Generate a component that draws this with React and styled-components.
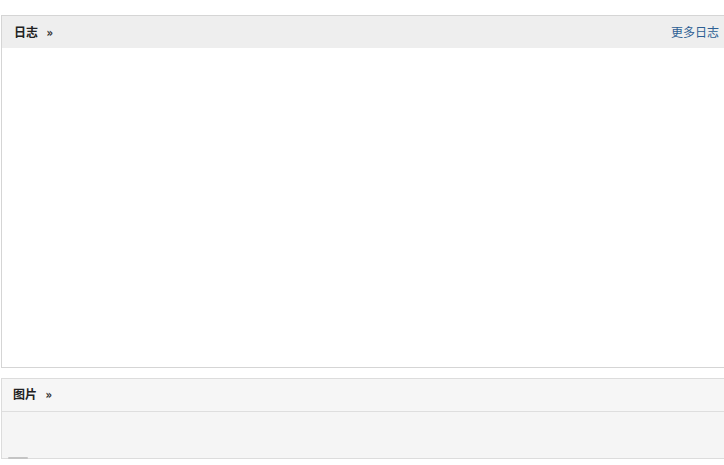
import {createGlobalStyle, styled} from "styled-components";

const GlobalStyle = createGlobalStyle`
  html, body {
    margin: 0;
    padding: 0;
    background: #fff;
    overflow: hidden;
    font-family: "Liberation Sans", "Noto Sans CJK SC", sans-serif;
    font-size: 12px;
  }
`

const Page = styled.div`
  padding: 15px 0 0 1px;
  width: 724px;
`

const Panel = styled.section`
  border: 1px solid ${props => props.$border || "#d8d8d8"};
  background: ${props => props.$bg || "#fff"};
  height: ${props => props.$height}px;
  margin-bottom: ${props => props.$gap || 0}px;
  box-sizing: border-box;
  position: relative;
`

const Header = styled.div`
  display: flex;
  align-items: center;
  justify-content: space-between;
  height: 32px;
  padding-left: ${props => props.$padLeft || 12}px;
  background: ${props => props.$bg || "#eeeeee"};
  border-bottom: ${props => props.$line ? "1px solid #dedede" : "none"};
`

const Title = styled.h3`
  margin: ${props => props.$lift || 0}px 0 0 0;
  font-size: 12px;
  font-weight: bold;
  color: #222;
  display: flex;
  align-items: center;
  gap: 8px;
  font-family: "Noto Sans CJK SC", sans-serif;

  > span {
    font-family: "DejaVu Sans", sans-serif;
    font-size: 12px;
    font-weight: bold;
    color: #333;
    transform: scaleX(0.85);
    margin-top: 2px;
  }
`

const More = styled.a`
  color: #2d5f94;
  text-decoration: none;
  font-family: "Noto Sans CJK SC", sans-serif;
  font-size: 12px;
  margin-right: 5px;
  margin-top: -2px;
`

const Scroll = styled.div`
  position: absolute;
  left: 6px;
  bottom: -1px;
  width: 20px;
  height: 2px;
  border-radius: 1px;
  background: #c4c4c4;
`

export default function App() {
    return (
        <>
            <GlobalStyle/>
            <Page>
                <Panel $height={353} $gap={10} $border="#d5d5d5">
                    <Header $padLeft={12}>
                        <Title $lift={-1}>日志<span>»</span></Title>
                        <More href="#">更多日志</More>
                    </Header>
                </Panel>
                <Panel $height={81} $bg="#f5f5f5" $border="#dcdcdc">
                    <Header $padLeft={11} $bg="#f6f6f6" $line>
                        <Title $lift={-3}>图片<span>»</span></Title>
                    </Header>
                    <Scroll/>
                </Panel>
            </Page>
        </>
    );
}
